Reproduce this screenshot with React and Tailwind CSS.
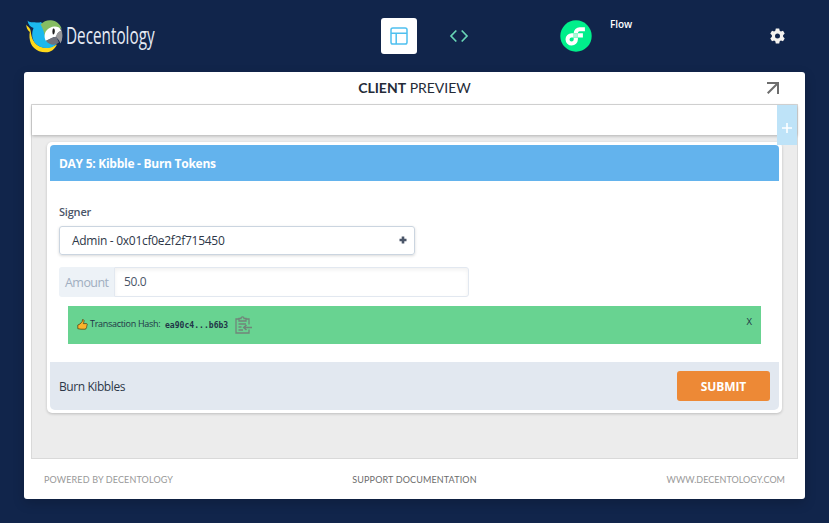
import React from "react";

function Logo() {
  return (
    <div className="flex w-[381px] items-center pl-[26px]">
      <svg width="37" height="34" viewBox="0 0 37 34" className="shrink-0">
        <path d="M.3 5.500c.7 1.700 3.200 2.500 4 5C5 13 5 16 6.500 20c2.500 5.500 8 9 14 8.500 4-.2 7.500-1.500 10.500-3C28.500 30.500 25 33.500 19.500 33.300 10 33.300 4 27 3.500 18.500c-.1-2 0-4 .3-5.500C1.500 11.500.2 8.500.3 5.500Z" fill="#ffd91a" />
        <path d="M1.500 1.500c2 2.500 5 1.500 8.500 2 2 .3 3.500 0 5-.6L20 9v11c2 3 6 5.500 10.500 5-3 3-6 4.300-10 4C11 28.800 5.700 22 6.200 15c.1-3 .8-4.500 1.300-6C4.500 8 2 5.500 1.500 1.500Z" fill="#1cb8ee" />
        <path d="M14.500 5.500C17.500 2.300 21 .9 25 1.200c5 .3 9 3.600 10.600 8.300L26 12l-6.500 8c-1-4-1.500-9-5-14.500Z" fill="#86bd62" />
        <path d="M35 9c2 4.500 1.800 10-.5 14.800L31 19Z" fill="#77787d" />
        <path d="M20 22c-2-3-1.800-7.500.3-10.300C23 8.200 28 6.300 32.500 8.200c1.500.9 2.300 2.300 2.600 3.800-2.800.6-4 3-4.800 5.700-3.500.3-6.500 3-10.300 4.300Z" fill="#fff" />
        <path d="M19.800 21.500c3.500-.8 6.300-3.800 10.500-3.800L33 23.500l-2.500 1.600c-4 1.500-8.500 0-10.700-3.600Z" fill="#6f727c" />
        <path d="M30 18c.8-3.500 2.500-6 5.300-6 1.600 3.800 1.300 8.800-.8 12.500-.7-3-2-4.600-4.500-6.500Z" fill="#989799" />
        <path d="M27 9.500c1.500-.5 2 1.300 1.800 3.300-.2 1.600-.8 2.800-1.800 2.700-.8-1.500-.8-4 0-6Z" fill="#222" />
      </svg>
      <div className="relative top-[-1px] ml-[3px] w-[89px]">
        <span className="inline-block origin-left scale-x-[.637] whitespace-nowrap font-['Open_Sans',sans-serif] text-[24px] font-normal leading-[32px] text-[#e6ebf5]">
          Decentology
        </span>
      </div>
    </div>
  );
}

function TopBar() {
  return (
    <header className="flex h-[72px] items-center">
      <Logo />
      <div className="flex h-9 w-9 items-center justify-center rounded-[3px] bg-white">
        <svg width="18" height="18" viewBox="0 0 18 18" fill="none" stroke="#4fc0ef" strokeWidth="1.500">
          <rect x="1" y="1" width="16" height="16" rx="1.800" />
          <path d="M1 6.200h16M6.200 6.200V17" />
        </svg>
      </div>
      <svg className="ml-8" width="20" height="14" viewBox="0 0 20 14" fill="none" stroke="#68d5b5" strokeWidth="1.700">
        <path d="M7.300 1.500 2 7l5.300 5.500M12.700 1.500 18 7l-5.300 5.500" />
      </svg>
      <svg className="ml-[91px]" width="32" height="32" viewBox="0 0 32 32">
        <circle cx="16" cy="16" r="15.700" fill="#00ef8b" />
        <path d="M13.700 13.200v4.200h4.200v2.100a6.200 6.200 0 1 1-6.200-6.300h2Zm0 4.200h-2a2.100 2.100 0 1 0 2 2.100Z" fill="#fff" fillRule="evenodd" />
        <path d="M13.700 13.200a6 6 0 0 1 6-6h5.200v4h-5.200a2 2 0 0 0-1.800 2h5v4.200h-5v-4.200Z" fill="#fff" />
        <path d="M13.700 13.200h4.200v4.200h-4.200Z" fill="#a9f9d5" />
      </svg>
      <span className="mb-6 ml-[18px] w-[160px] font-['Open_Sans',sans-serif] text-[10px] font-semibold leading-[14px] tracking-[-.1px] text-white">Flow</span>
      <svg width="15" height="16" viewBox="0 0 15 16" fill="#f4f2ef" fillRule="evenodd">
        <path d="M5.800.5h3.400l.5 2.200 1.200.7 2.100-.7L14.700 5.600 13.100 7.200v1.600l1.600 1.600-1.700 2.900-2.100-.7-1.200.7-.5 2.200H5.800l-.5-2.200-1.200-.7-2.100.7-1.700-2.900 1.600-1.600V7.200L.3 5.600 2 2.700l2.100.7 1.200-.7ZM7.500 5.500a2.500 2.500 0 1 0 0 5 2.500 2.500 0 0 0 0-5Z" />
      </svg>
    </header>
  );
}

function ActionCard() {
  return (
    <section className="ml-[15px] mt-[7px] flex h-[271px] w-[735px] flex-col rounded-[5px] bg-white p-[3px] font-['Open_Sans',sans-serif] shadow-[0_1px_3px_rgba(0,0,0,.2)]">
      <h2 className="flex h-9 items-center rounded-t-[4px] bg-[#63b3ed] pl-[9px] pt-[2px] text-[12px] font-bold tracking-[-.27px] text-white">
        DAY 5: Kibble - Burn Tokens
      </h2>
      <div className="flex h-[181px] flex-col pl-[9px]">
        <label className="mt-[23px] text-[11px] font-semibold leading-4 tracking-[-.2px] text-[#4a5568]">Signer</label>
        <div className="mt-[6px] flex h-[29px] w-[356px] shrink-0 items-center justify-between rounded-[3px] border border-[#cbd5e0] pl-3 pr-[7px] text-[12px] tracking-[-.28px] text-[#2d3748] shadow-[0_1px_3px_rgba(0,0,0,.15)]">
          <span>Admin - 0x01cf0e2f2f715450</span>
          <svg width="8" height="8" viewBox="0 0 8 8" fill="#4a5568" className="mb-px"><path d="M2.700.5h2.600v2.200h2.200v2.600H5.300v2.200H2.700V5.300H.5V2.700h2.200Z" /></svg>
        </div>
        <div className="mt-3 flex h-[30px] w-[410px] shrink-0">
          <span className="flex w-[55px] items-center rounded-l-[3px] bg-[#edf2f7] pl-[6px] pt-[2px] text-[12.500px] tracking-[-.55px] text-[#a0aec0]">Amount</span>
          <div className="flex flex-1 items-center rounded-r-[3px] border border-[#e2e8f0] pl-[9px] text-[12px] tracking-[-.4px] text-[#4a5568] shadow-[inset_0_2px_4px_rgba(0,0,0,.06)]">50.0</div>
        </div>
        <div className="ml-[9px] mt-[9px] flex h-[38px] w-[693px] shrink-0 items-center bg-[#68d391] pl-[9px] pr-[9px] text-[#1f3547]">
          <svg width="11" height="11" viewBox="0 0 11 11" fill="#fbb32b" stroke="#493611" strokeWidth=".7" strokeLinejoin="round" className="mb-px">
            <path d="M.8 6 3 5 5.200 2.500 5.500.6c1.400-.3 1.900.9 1.300 2.700l-.5 1.300h3c1 0 1.200 1.100.5 1.600.5.500.4 1.200-.2 1.500.3.700 0 1.100-.5 1.300.1.700-.3 1.200-1 1.200H4L.8 9.700Z" />
          </svg>
          <span className="mb-[2px] ml-[2px] w-[75px] whitespace-nowrap text-[9px] tracking-[-.3px]">Transaction Hash:</span>
          <span className="mb-px flex w-[70px] items-center">
            <span className="block origin-left scale-x-[.93] whitespace-nowrap font-['DejaVu_Sans_Mono',monospace] text-[8.700px] font-bold leading-[12px]">ea90c4...b6b3</span>
          </span>
          <svg width="17" height="18" viewBox="0 0 17 18" fill="none" stroke="#71857a" strokeWidth="1.300">
            <path d="M4 3H1v14h13v-3.500M11 3h3v5.500M4 2.500h2C6 .3 9 .3 9 2.500h2V5H4ZM3.500 8H11M3.500 11H6.500M3.500 14H8" />
            <path d="M17 11.500H9.500M11.500 9 8.700 11.500l2.800 2.500" strokeWidth="1.500" />
          </svg>
          <span className="mb-[5px] ml-auto text-[9.500px]">X</span>
        </div>
      </div>
      <footer className="flex h-12 items-center justify-between rounded-b-[5px] bg-[#e2e8f0] px-[9px]">
        <span className="pt-[2px] text-[12px] tracking-[-.42px] text-[#2d3748]">Burn Kibbles</span>
        <button className="h-[30px] w-[93px] rounded-[3px] bg-[#ed8936] pt-[2px] text-[12px] font-bold tracking-[-.1px] text-white">SUBMIT</button>
      </footer>
    </section>
  );
}

export default function App() {
  return (
    <div className="h-[523px] w-[829px] overflow-hidden bg-[#11254b]">
      <TopBar />
      <main className="ml-6 flex h-[427px] w-[781px] flex-col rounded-[3px] bg-white px-[7px] font-['Lato',sans-serif] shadow-[0_4px_12px_rgba(0,0,0,.18)]">
        <div className="grid h-8 grid-cols-[1fr_auto_1fr] items-center">
          <h1 className="col-start-2 pb-px text-[14px] tracking-[-.02px] text-[#252b38]"><b>CLIENT</b> PREVIEW</h1>
          <svg className="mr-[19px] justify-self-end" width="12" height="12" viewBox="0 0 12 12" fill="none" stroke="#6d6d6d" strokeWidth="2">
            <path d="M0 1h11v11M11 1 .7 11.300" />
          </svg>
        </div>
        <div className="relative h-[355px] w-[767px] border border-[#d9d9d9] bg-[#ececec]">
          <div className="h-[30px] bg-white shadow-[0_1px_3px_rgba(0,0,0,.25)]" />
          <ActionCard />
          <button className="absolute right-0 top-0 flex h-10 w-5 items-center justify-center bg-[#bee3f8] pt-[6px]">
            <svg width="10" height="10" viewBox="0 0 10 10" stroke="white" strokeWidth="1.600"><path d="M0 5h10M5 0v10" /></svg>
          </button>
        </div>
        <footer className="grid flex-1 grid-cols-3 items-center px-[13px] pt-[2px] text-[9px] text-[#999]">
          <span className="tracking-[.14px]">POWERED BY DECENTOLOGY</span>
          <span className="text-center tracking-[.14px] text-[#6c6c6c]">SUPPORT DOCUMENTATION</span>
          <span className="text-right tracking-[.02px]">WWW.DECENTOLOGY.COM</span>
        </footer>
      </main>
    </div>
  );
}
